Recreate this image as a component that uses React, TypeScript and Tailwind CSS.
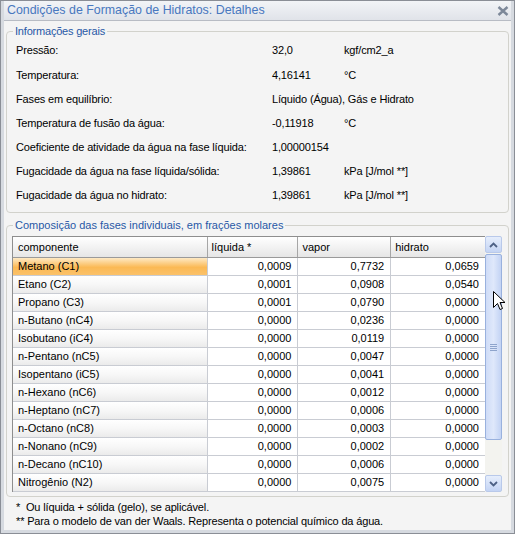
import React from "react";

const rows: [string, string, string, string][] = [
  ["Metano (C1)", "0,0009", "0,7732", "0,0659"],
  ["Etano (C2)", "0,0001", "0,0908", "0,0540"],
  ["Propano (C3)", "0,0001", "0,0790", "0,0000"],
  ["n-Butano (nC4)", "0,0000", "0,0236", "0,0000"],
  ["Isobutano (iC4)", "0,0000", "0,0119", "0,0000"],
  ["n-Pentano (nC5)", "0,0000", "0,0047", "0,0000"],
  ["Isopentano (iC5)", "0,0000", "0,0041", "0,0000"],
  ["n-Hexano (nC6)", "0,0000", "0,0012", "0,0000"],
  ["n-Heptano (nC7)", "0,0000", "0,0006", "0,0000"],
  ["n-Octano (nC8)", "0,0000", "0,0003", "0,0000"],
  ["n-Nonano (nC9)", "0,0000", "0,0002", "0,0000"],
  ["n-Decano (nC10)", "0,0000", "0,0006", "0,0000"],
  ["Nitrogênio (N2)", "0,0000", "0,0075", "0,0000"],
];

const info: [string, string, string, string][] = [
  ["Pressão:", "32,0", "kgf/cm2_a", "h-[25px] pt-[2px]"],
  ["Temperatura:", "4,16141", "°C", "h-[25px] pt-[2px]"],
  ["Fases em equilíbrio:", "Líquido (Água), Gás e Hidrato", "", "h-[24px]"],
  ["Temperatura de fusão da água:", "-0,11918", "°C", "h-[24px]"],
  ["Coeficiente de atividade da água na fase líquida:", "1,00000154", "", "h-[24px]"],
  ["Fugacidade da água na fase líquida/sólida:", "1,39861", "kPa [J/mol **]", "h-[24px]"],
  ["Fugacidade da água no hidrato:", "1,39861", "kPa [J/mol **]", "h-[24px]"],
];

export default function App() {
  return (
    <div
      className="relative w-[515px] h-[534px] border border-[#8a8e96] bg-[#d6dae0] px-[3px] pb-[3px] flex flex-col text-[11px] text-black"
      style={{ fontFamily: '"Liberation Sans", Arial, sans-serif' }}
    >
      {/* Title bar */}
      <div className="h-[19px] flex items-center justify-between pl-[3px] pr-[2px] bg-gradient-to-b from-[#f2f4f7] to-[#e0e3e9]">
        <span className="text-[12.4px] text-[#4878bf] leading-none -mt-[1px]">
          Condições de Formação de Hidratos: Detalhes
        </span>
        <svg width="12" height="10" viewBox="0 0 12 10">
          <path d="M1.5 1 L10.5 9 M10.5 1 L1.5 9" stroke="#7d8899" strokeWidth="2.4" />
        </svg>
      </div>
      {/* Body */}
      <div className="flex-1 bg-[#f4f4f4] border-t border-[#b8bcc4] flex flex-col px-[2px] pt-[3px]">
        <fieldset className="border border-[#d2d2cc] rounded-[4px] mx-0 pl-[9px] pr-[4px] pb-[5px] pt-0 min-w-0">
          <legend className="-ml-[3px] px-[2px] text-[11px] tracking-[-0.2px] text-[#2858a6] leading-[14px]">
            Informações gerais
          </legend>
          <div className="flex flex-col -mt-[1px] tracking-[-0.15px]">
            {info.map(([l, v, u, h], i) => (
              <div key={i} className={`flex items-center ${h}`}>
                <span className="w-[256px] shrink-0">{l}</span>
                {u ? (
                  <>
                    <span className="w-[72px] shrink-0">{v}</span>
                    <span>{u}</span>
                  </>
                ) : (
                  <span>{v}</span>
                )}
              </div>
            ))}
          </div>
        </fieldset>

        <fieldset className="mt-[5px] border border-[#d2d2cc] rounded-[4px] pl-[5px] pr-[5px] pb-[4px] pt-0 min-w-0">
          <legend className="ml-[1px] px-[2px] text-[11px] text-[#2858a6] leading-[14px]">
            Composição das fases individuais, em frações molares
          </legend>
          <div className="flex h-[256px] mt-[4px]">
            <div className="w-[473px] h-full overflow-hidden border-l border-t border-[#8e8e8e] bg-white">
              {/* header */}
              <div className="flex h-[21px] border-b border-[#9a9a9a] bg-gradient-to-b from-[#ffffff] to-[#e6e6e6]">
                <div className="w-[195px] pl-[5px] flex items-center border-r border-[#a6a6a6]">componente</div>
                <div className="w-[91px] pl-[4px] flex items-center border-r border-[#a6a6a6]">líquida *</div>
                <div className="w-[93px] pl-[4px] flex items-center border-r border-[#a6a6a6]">vapor</div>
                <div className="w-[94px] pl-[4px] flex items-center">hidrato</div>
              </div>
              {rows.map((r, i) => (
                <div key={i} className="flex h-[18px] border-b border-[#c9ccd3]">
                  <div
                    className={`w-[195px] pl-[5px] flex items-center border-r border-[#c9ccd3] ${
                      i === 0
                        ? "bg-[linear-gradient(to_bottom,#fee9c4,#fbb954_55%,#fbc26a)]"
                        : "bg-[linear-gradient(to_bottom,#ffffff,#f7f7f7_50%,#ebebeb)]"
                    }`}
                  >
                    {r[0]}
                  </div>
                  <div className="w-[91px] pr-[6px] flex items-center justify-end border-r border-[#c9ccd3]">{r[1]}</div>
                  <div className="w-[93px] pr-[6px] flex items-center justify-end border-r border-[#c9ccd3]">{r[2]}</div>
                  <div className="w-[94px] pr-[6px] flex items-center justify-end">{r[3]}</div>
                </div>
              ))}
            </div>
            {/* scrollbar */}
            <div className="w-[17px] h-full bg-[#f3f3ef] flex flex-col">
              <div className="h-[17px] rounded-[2px] border border-[#b9c9ea] bg-gradient-to-b from-[#e6eefc] to-[#c4d4f4] flex items-center justify-center">
                <svg width="9" height="6" viewBox="0 0 9 6">
                  <path d="M1 5 L4.5 1.5 L8 5" stroke="#4d6185" strokeWidth="1.8" fill="none" />
                </svg>
              </div>
              <div className="flex-1 flex flex-col py-[1px]">
                <div className="h-[186px] rounded-[2px] border border-[#99b1de] bg-gradient-to-r from-[#cfdcf7] via-[#dfe8fb] to-[#c3d3f4] flex items-center justify-center">
                  <div className="flex flex-col gap-[1px]">
                    <div className="w-[7px] h-[1px] bg-[#8ea4cc]" />
                    <div className="w-[7px] h-[1px] bg-[#8ea4cc]" />
                    <div className="w-[7px] h-[1px] bg-[#8ea4cc]" />
                    <div className="w-[7px] h-[1px] bg-[#8ea4cc]" />
                  </div>
                </div>
              </div>
              <div className="h-[17px] rounded-[2px] border border-[#b9c9ea] bg-gradient-to-b from-[#e6eefc] to-[#c4d4f4] flex items-center justify-center">
                <svg width="9" height="6" viewBox="0 0 9 6">
                  <path d="M1 1 L4.5 4.5 L8 1" stroke="#4d6185" strokeWidth="1.8" fill="none" />
                </svg>
              </div>
            </div>
          </div>
        </fieldset>

        <div className="pl-[10px] pt-[3px] leading-[14px] tracking-[-0.15px]">
          <div>*&nbsp; Ou líquida + sólida (gelo), se aplicável.</div>
          <div>** Para o modelo de van der Waals. Representa o potencial químico da água.</div>
        </div>
      </div>

      {/* mouse cursor */}
      <svg className="absolute left-[492px] top-[290px]" width="13" height="21" viewBox="0 0 13 21">
        <path
          d="M0.5 0.5 L0.5 16.5 L4.5 12.5 L7 18.5 L9.5 17.5 L7 11.5 L12 11.5 Z"
          fill="#ffffff"
          stroke="#000000"
          strokeWidth="1"
          strokeLinejoin="miter"
        />
      </svg>
    </div>
  );
}
